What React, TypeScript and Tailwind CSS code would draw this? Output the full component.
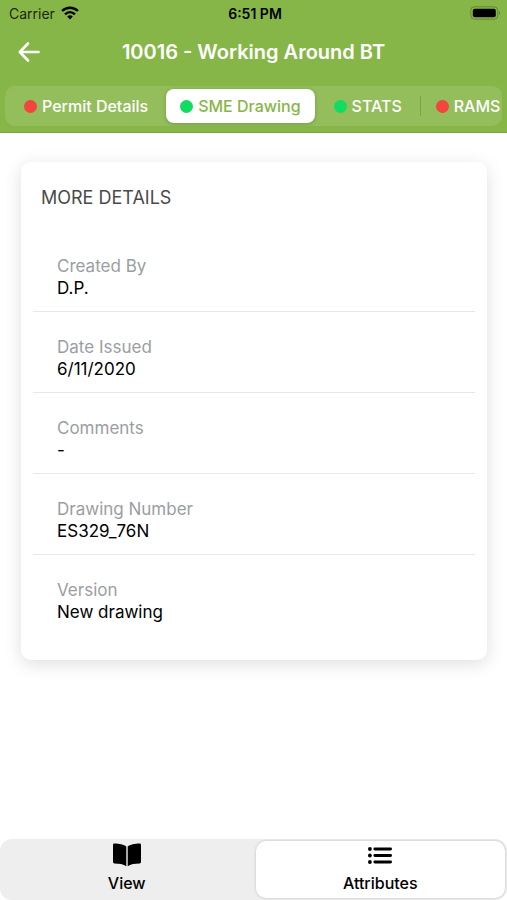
import { useState } from "react";

type Tab = { name: string; dot: string };

const tabs: Tab[] = [
  { name: "Permit Details", dot: "bg-[#f2453d]" },
  { name: "SME Drawing", dot: "bg-[#0fdc60]" },
  { name: "STATS", dot: "bg-[#0fdc60]" },
  { name: "RAMS", dot: "bg-[#f2453d]" },
];

const details = [
  { label: "Created By", value: "D.P." },
  { label: "Date Issued", value: "6/11/2020" },
  { label: "Comments", value: "-" },
  { label: "Drawing Number", value: "ES329_76N" },
  { label: "Version", value: "New drawing" },
];

function WifiIcon() {
  return (
    <svg viewBox="0 0 18 14" className="h-[14px] w-[18px]" fill="none" stroke="black" strokeWidth="2.5">
      <path d="M1.1 5 C5.5 0.5 12.5 0.5 16.9 5" />
      <path d="M4 8.3 C7 5.4 11 5.4 14 8.3" />
      <path d="M6.2 10.5 Q9 8 11.8 10.5 L9 13.4 Z" fill="black" stroke="none" />
    </svg>
  );
}

function BatteryIcon() {
  return (
    <svg viewBox="0 0 31 14" className="h-[14px] w-[31px]">
      <rect x="0.8" y="0.8" width="27" height="12.4" rx="3.6" fill="none" stroke="#628632" strokeWidth="1" />
      <rect x="2.8" y="2.8" width="23" height="8.4" rx="2" fill="black" />
      <path d="M29 5 Q31 7 29 9 Z" fill="#628632" />
    </svg>
  );
}

function BookIcon() {
  return (
    <svg viewBox="0 0 28 24" className="h-6 w-7" fill="black">
      <path d="M13.3 3.6 C11 1.6 6 0.6 1.4 0.6 Q0 0.6 0 2 V19 Q0 20.4 1.4 20.4 C6 20.4 10.5 21 13.3 23.2 Z" />
      <path d="M14.7 3.6 C17 1.6 22 0.6 26.6 0.6 Q28 0.6 28 2 V19 Q28 20.4 26.6 20.4 C22 20.4 17.5 21 14.7 23.2 Z" />
    </svg>
  );
}

function ListIcon() {
  return (
    <svg viewBox="0 0 24 24" className="h-6 w-6" fill="black" stroke="black" strokeLinecap="round">
      <path d="M6.8 6 H22.6 M6.8 12.5 H22.6 M6.8 19 H22.6" strokeWidth="2.8" />
      <circle cx="1.9" cy="6" r="1.9" stroke="none" />
      <circle cx="1.9" cy="12.5" r="1.9" stroke="none" />
      <circle cx="1.9" cy="19" r="1.9" stroke="none" />
    </svg>
  );
}

export default function App() {
  const [tab, setTab] = useState("SME Drawing");
  const [mode, setMode] = useState("Attributes");

  return (
    <div className="flex min-h-screen flex-col bg-white font-['Inter','Liberation_Sans',sans-serif] text-black">
      <header className="border-b border-[#7aa541] bg-[#87b648] pb-[6px]">
        {/* STATUS BAR */}
        <div className="grid h-7 grid-cols-3 items-center pr-[6px] pb-[2px] pl-[9px] text-[14px]">
          <div className="flex items-center gap-[6px] text-[#1c260f]">
            <span>Carrier</span>
            <WifiIcon />
          </div>
          <div className="text-center font-semibold">6:51 PM</div>
          <div className="flex justify-end">
            <BatteryIcon />
          </div>
        </div>

        {/* TITLE */}
        <div className="grid h-12 grid-cols-[1fr_auto_1fr] items-center px-[18px] text-white">
          <button aria-label="Back" onClick={() => setTab("Permit Details")} className="w-[22px]">
            <svg
              viewBox="0 0 22 20"
              className="h-5 w-[22px]"
              fill="none"
              stroke="white"
              strokeWidth="2.6"
              strokeLinecap="round"
              strokeLinejoin="round"
            >
              <path d="M10 1.5 L1.8 10 L10 18.5 M1.8 10 H20.5" />
            </svg>
          </button>
          <h1 className="text-[20px] font-semibold">10016 - Working Around BT</h1>
        </div>

        {/* TABS */}
        <nav className="mx-[5px] mt-[10px] flex h-10 items-center overflow-x-auto rounded-[10px] bg-[#93be5b] [scrollbar-width:none]">
          {tabs.map((t, i) => (
            <button
              key={t.name}
              onClick={() => setTab(t.name)}
              className={
                "flex h-[34px] shrink-0 items-center gap-[5px] text-[16px] font-medium whitespace-nowrap " +
                (tab === t.name
                  ? "rounded-lg bg-white px-[14px] text-[#87b648] shadow-[0_1px_4px_rgba(0,0,0,0.2)]"
                  : i === 3
                    ? "text-white"
                    : "pr-[18px] pl-[19px] text-white")
              }
            >
              {i === 3 && <span className="mr-[10px] h-5 w-px bg-[#7ba543]" />}
              <span className={"size-[13px] rounded-full " + t.dot} />
              {t.name}
            </button>
          ))}
        </nav>
      </header>

      <main className="flex-1 pt-[29px] pr-5 pl-[21px]">
        <section className="rounded-[10px] bg-white px-3 pt-[25px] pb-[25px] shadow-[0_4px_18px_rgba(0,0,0,0.13)]">
          <h2 className="px-2 pb-[22px] text-[18px] leading-[22px] text-[#4a4a4a]">MORE DETAILS</h2>
          <dl>
            {details.map((d) => (
              <div
                key={d.label}
                className="border-b border-[#e8e8e8] pt-6 pb-3 pl-6 text-[17px] leading-[22px] last:border-b-0"
              >
                <dt className="text-[#9a9ea3]">{d.label}</dt>
                <dd>{d.value}</dd>
              </div>
            ))}
          </dl>
        </section>
      </main>

      {/* BOTTOM SWITCH */}
      <footer className="grid grid-cols-2 gap-1 rounded-xl bg-[#eeeeee] p-[2px]">
        {["View", "Attributes"].map((m) => (
          <button
            key={m}
            onClick={() => setMode(m)}
            className={
              "flex h-[57px] flex-col items-center rounded-[10px] pt-[2px] text-[16px] leading-5 font-medium " +
              (mode === m ? "bg-white shadow-[0_0_3px_rgba(0,0,0,0.2)]" : "")
            }
          >
            {m === "View" ? <BookIcon /> : <ListIcon />}
            <span className="mt-[6px]">{m}</span>
          </button>
        ))}
      </footer>
    </div>
  );
}
